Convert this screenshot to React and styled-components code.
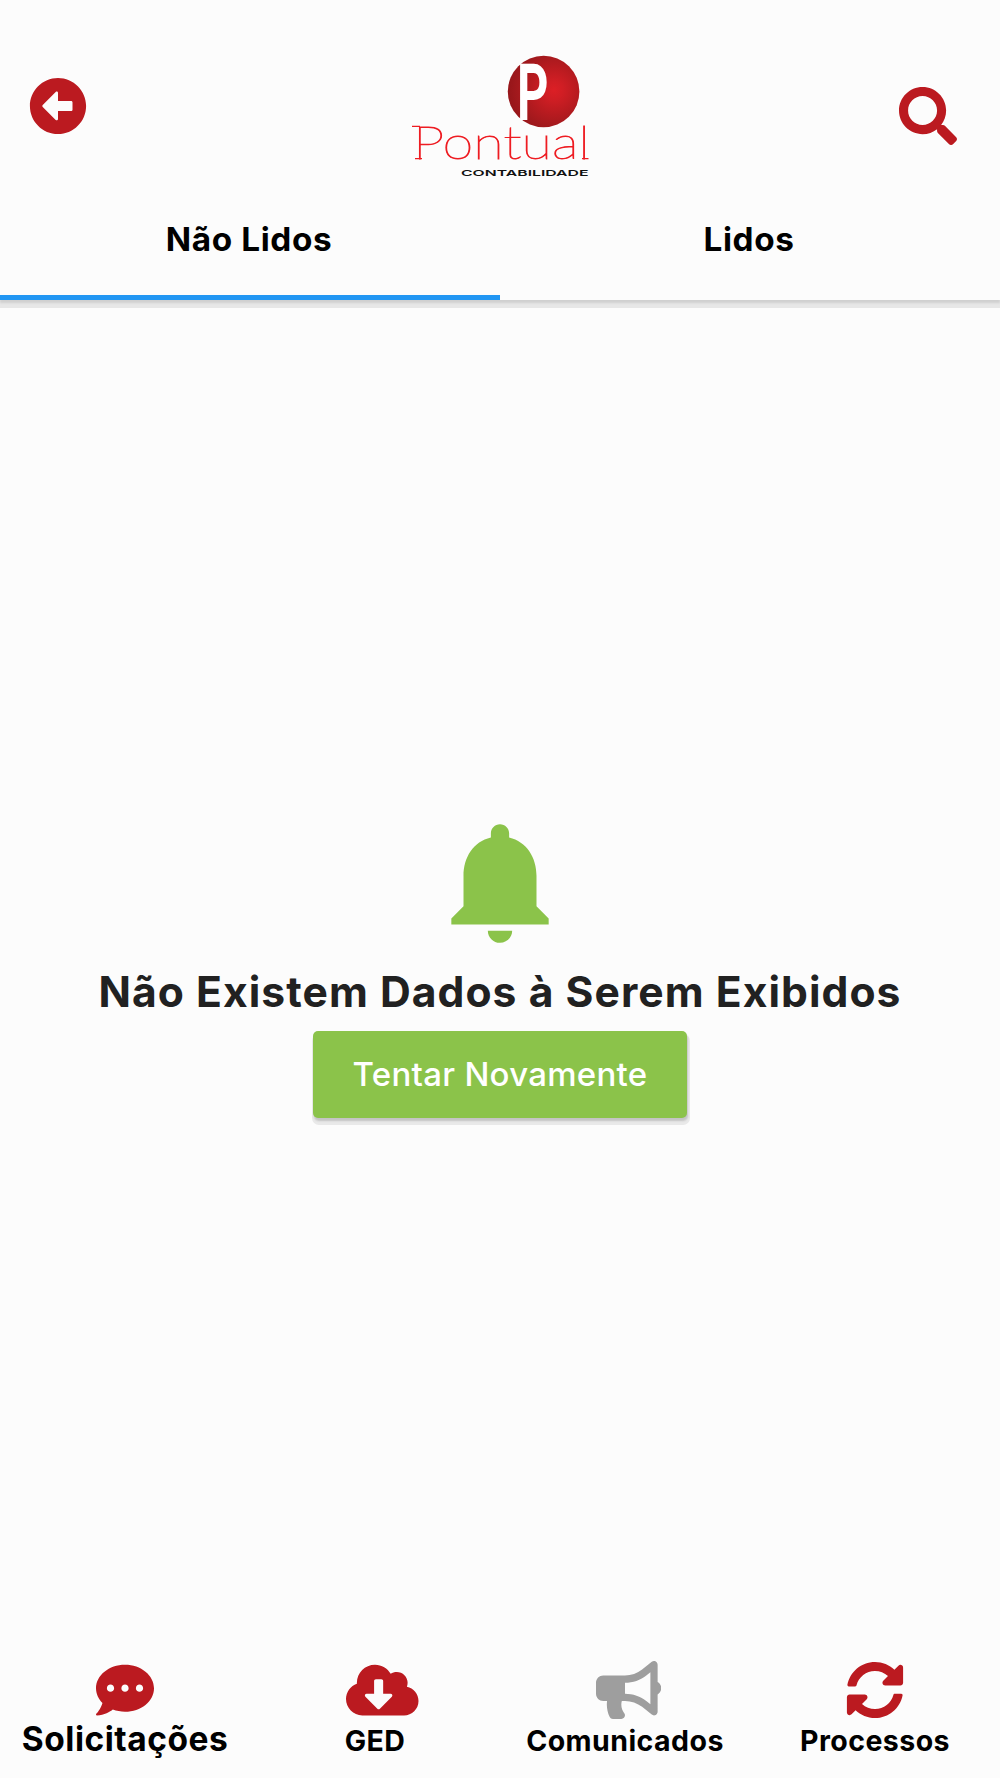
import React from "react";
import styled, { createGlobalStyle } from "styled-components";
import {
  FaArrowAltCircleLeft,
  FaSearch,
  FaCommentDots,
  FaCloudDownloadAlt,
  FaBullhorn,
  FaSyncAlt,
} from "react-icons/fa";

const GlobalStyle = createGlobalStyle`
  * { box-sizing: border-box; }
  body { margin: 0; background: #fcfcfc; }
`;

const Screen = styled.div`
  width: 1000px;
  height: 1778px;
  display: flex;
  flex-direction: column;
  background: #fcfcfc;
  color: #000;
  font-family: Inter, "Liberation Sans", sans-serif;
  overflow: hidden;
`;

const Header = styled.header`
  flex: none;
  height: 300px;
  display: flex;
  flex-direction: column;
  box-shadow: 0 3px 2px #d0d0d0, 0 8px 0 #e7e7e7;
`;

const TopBar = styled.div`
  height: 190px;
  display: flex;
  justify-content: space-between;
  align-items: flex-start;
  padding: 30px 43.5px 0 29px;
`;

const IconButton = styled.button`
  border: 0;
  padding: 0;
  margin-top: ${(p) => p.$top}px;
  background: none;
  color: #bb1a20;
  font-size: 58px;
  line-height: 0;
`;

const Logo = styled.svg`
  display: block;
  width: 200px;
  height: 155px;
  margin-left: 14.5px;
`;

const Tabs = styled.nav`
  flex: 1;
  display: flex;
`;

const Tab = styled.button`
  flex: 1;
  border: 0;
  padding: 0 2px 8px 0;
  background: none;
  border-bottom: 5px solid ${(p) => (p.$active ? "#2196f3" : "transparent")};
  font: 650 33.3px/40px Inter, "Liberation Sans", sans-serif;
  letter-spacing: 0.6px;
  color: #000;
`;

const Empty = styled.main`
  flex: 1;
  display: flex;
  flex-direction: column;
  align-items: center;
  padding-top: 508.5px;
`;

const Bell = styled.svg`
  display: block;
  width: 146px;
  height: 146px;
  fill: #8bc34a;
`;

const Message = styled.h1`
  margin: 10.5px 0 0;
  font-size: 42.6px;
  line-height: 54px;
  font-weight: 650;
  letter-spacing: 1.05px;
  color: #212121;
  white-space: nowrap;
`;

const Retry = styled.button`
  width: 374px;
  height: 87px;
  margin-top: 12px;
  padding: 0 0 2px;
  border: 0;
  border-radius: 5px;
  background: #8bc34a;
  box-shadow: 1px 3px 2px #c4c4c4, 1px 5px 0 2px #e9e9e9;
  color: #fff;
  font: 530 33px/40px Inter, "Liberation Sans", sans-serif;
  letter-spacing: 0.27px;
`;

const BottomNav = styled.nav`
  flex: none;
  height: 117px;
  display: grid;
  grid-template-columns: repeat(4, 1fr);
`;

const NavItem = styled.div`
  display: flex;
  flex-direction: column;
  align-items: center;
  color: ${(p) => (p.$muted ? "#9e9e9e" : "#bb1a20")};
`;

const NavIcon = styled.span`
  display: flex;
  width: 58px;
  height: 58px;

  svg {
    flex: none;
    width: ${(p) => p.$width}px;
    height: 58px;
  }
`;

const NavLabel = styled.span`
  margin-top: ${(p) => (p.$large ? 0 : 2)}px;
  font-size: ${(p) => (p.$large ? 33.5 : 28.5)}px;
  line-height: 40px;
  font-weight: 650;
  letter-spacing: ${(p) => p.$spacing}px;
  color: #000;
`;

const navItems = [
  { label: "Solicitações", Icon: FaCommentDots, width: 58, large: true, spacing: 0.5 },
  { label: "GED", Icon: FaCloudDownloadAlt, width: 72.5, spacing: 0.4 },
  { label: "Comunicados", Icon: FaBullhorn, width: 65.25, muted: true, spacing: 0.45 },
  { label: "Processos", Icon: FaSyncAlt, width: 58, spacing: 0.45 },
];

function PontualLogo() {
  return (
    <Logo viewBox="400 30 200 155">
      <defs>
        <radialGradient id="sphere" gradientUnits="userSpaceOnUse" cx="554" cy="90" r="46">
          <stop offset="0" stopColor="#dc1f25" />
          <stop offset="0.2" stopColor="#d01e24" />
          <stop offset="0.5" stopColor="#b91b20" />
          <stop offset="0.8" stopColor="#a2191d" />
          <stop offset="1" stopColor="#96161a" />
        </radialGradient>
      </defs>
      <circle cx="543.6" cy="91.5" r="35.8" fill="url(#sphere)" />
      <text x="517" y="119.5" fill="#fff" fontFamily="Roboto, sans-serif" fontWeight="700" fontSize="79" textLength="31.5" lengthAdjust="spacingAndGlyphs">P</text>
      <g stroke="#ee1c22">
        <text x="413" y="159" fill="#ee1c22" strokeWidth="0.9" fontFamily="Lato, sans-serif" fontWeight="100" fontSize="46" textLength="177" lengthAdjust="spacingAndGlyphs">Pontual</text>
        <path d="M412 126.4H420M415 158.6H422M582 158.6H588.5" fill="none" strokeWidth="1.4" />
      </g>
      <text x="461" y="176" fill="#111" fontFamily="Inter, sans-serif" fontWeight="600" fontSize="8.2" textLength="127.5" lengthAdjust="spacingAndGlyphs">CONTABILIDADE</text>
    </Logo>
  );
}

export default function App() {
  return (
    <Screen>
      <GlobalStyle />
      <Header>
        <TopBar>
          <IconButton $top={47.4} aria-label="Voltar"><FaArrowAltCircleLeft /></IconButton>
          <PontualLogo />
          <IconButton $top={57} aria-label="Buscar"><FaSearch /></IconButton>
        </TopBar>
        <Tabs>
          <Tab $active>Não Lidos</Tab>
          <Tab>Lidos</Tab>
        </Tabs>
      </Header>
      <Empty>
        <Bell viewBox="0 0 24 24">
          <path d="M12 22c1.1 0 2-.9 2-2h-4c0 1.1.89 2 2 2zm6-6v-5c0-3.07-1.64-5.64-4.5-6.32V4c0-.83-.67-1.5-1.5-1.5s-1.5.67-1.5 1.5v.68C7.63 5.36 6 7.92 6 11v5l-2 2v1h16v-1l-2-2z" />
        </Bell>
        <Message>Não Existem Dados à Serem Exibidos</Message>
        <Retry>Tentar Novamente</Retry>
      </Empty>
      <BottomNav>
        {navItems.map(({ label, Icon, width, large, muted, spacing }) => (
          <NavItem key={label} $muted={muted}>
            <NavIcon $width={width}><Icon /></NavIcon>
            <NavLabel $large={large} $spacing={spacing}>{label}</NavLabel>
          </NavItem>
        ))}
      </BottomNav>
    </Screen>
  );
}
